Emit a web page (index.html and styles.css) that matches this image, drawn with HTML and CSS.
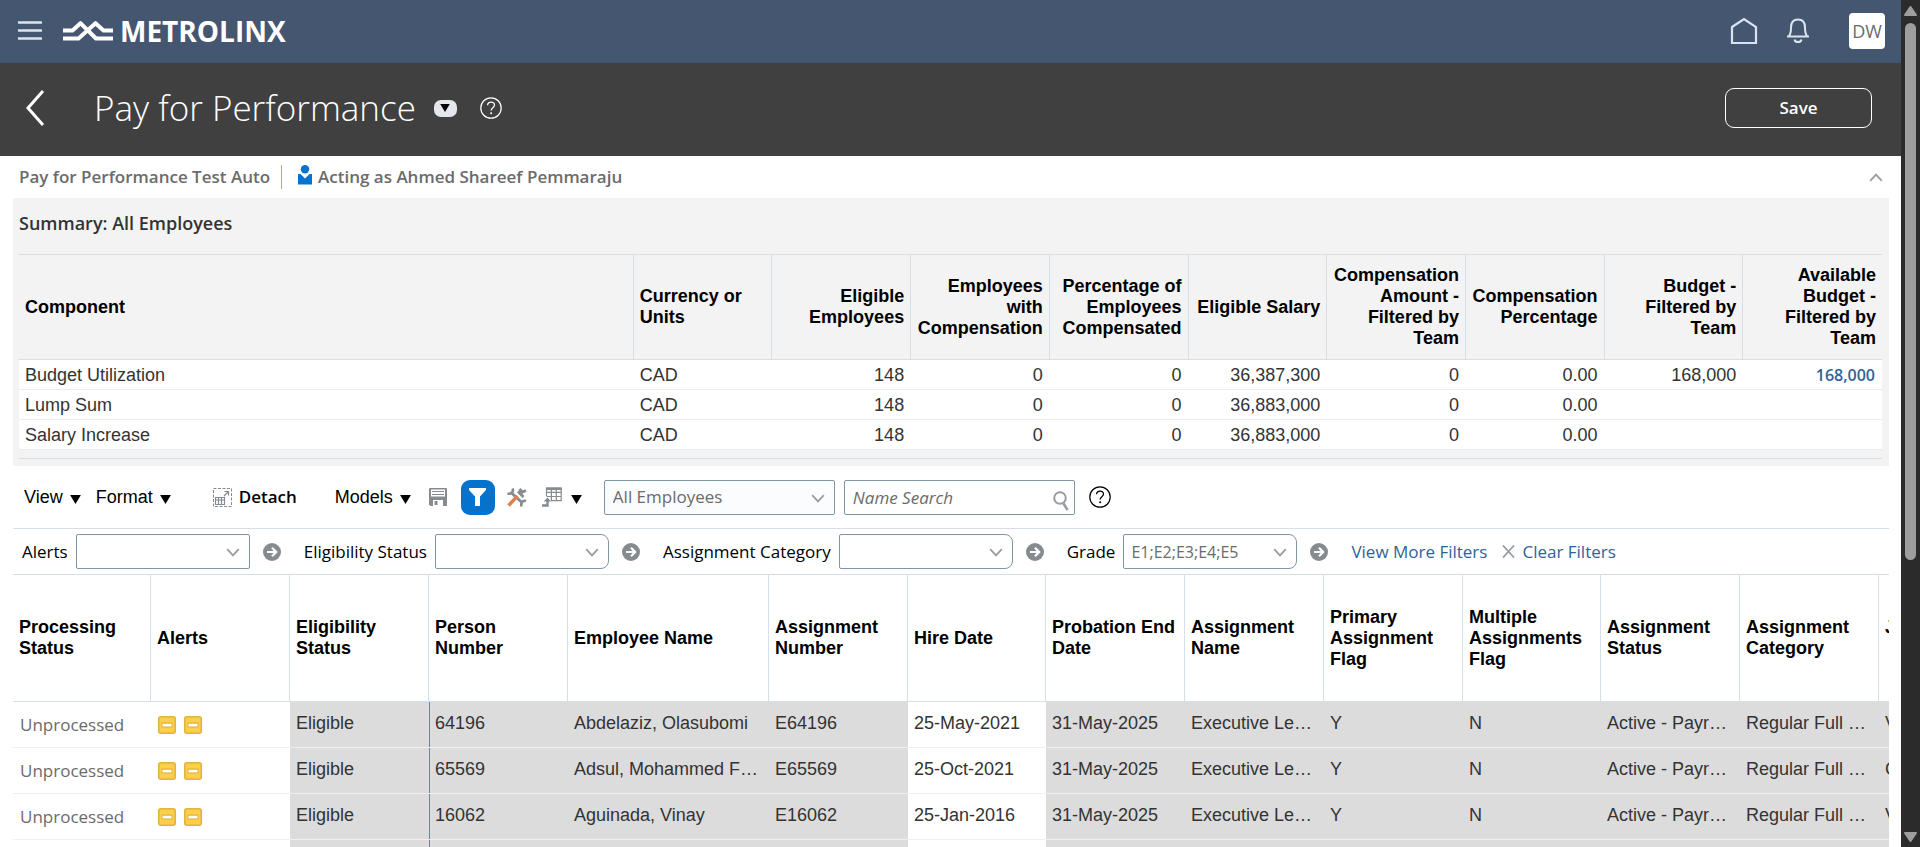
FILE: index.html
```html
<!DOCTYPE html>
<html lang="en">
<head>
<meta charset="utf-8">
<title>Pay for Performance</title>
<link rel="stylesheet" href="styles.css">
</head>
<body>
<svg class="sprite" aria-hidden="true">
  <symbol id="chevron" viewBox="0 0 14 9"><path d="M1.2 1.2 7 7.4l5.800-6.200" fill="none" stroke="currentColor" stroke-width="1.800"/></symbol>
  <symbol id="caret" viewBox="0 0 12 10"><path d="M0 0h12L6 10z" fill="currentColor"/></symbol>
  <symbol id="go" viewBox="0 0 18 18"><circle cx="9" cy="9" r="9" fill="#868b90"/><path d="M4 9h9M9 4.800 13.200 9 9 13.200" fill="none" stroke="#fff" stroke-width="2.200"/></symbol>
  <symbol id="help" viewBox="0 0 22 22"><circle cx="11" cy="11" r="10.200" fill="none" stroke="currentColor" stroke-width="1.200"/><path d="M7.600 8.300c0-4.400 6.900-4.200 6.900-.3 0 2.600-3.400 2.700-3.400 5.500" fill="none" stroke="currentColor" stroke-width="1.300"/><circle cx="11.100" cy="16.300" r="1" fill="currentColor"/></symbol>
  <symbol id="minus" viewBox="0 0 18 18"><rect x=".75" y=".75" width="16.500" height="16.500" rx="2" fill="#fccf4a" stroke="#dfb440" stroke-width="1.500"/><rect x="3.500" y="6.500" width="11" height="5" fill="#dfb440"/><rect x="4.500" y="7.800" width="9" height="2.600" fill="#fff"/></symbol>
</svg>
<div class="window">
  <div class="page">
    <header class="brandbar">
      <button class="plain" aria-label="Menu">
        <svg width="24" height="22" viewBox="0 0 24 22"><path d="M0 2.500h24M0 10.500h24M0 18.500h24" stroke="#dbe4ee" stroke-width="2.400"/></svg>
      </button>
      <a class="brand" href="#">
        <svg width="50" height="20" viewBox="0 0 50 20" fill="none" stroke="#fff" stroke-width="4" stroke-linejoin="round"><path d="M0 9.500h9.500L17.500 2.200 33 17.500h17"/><path d="M0 17.500h15.500L32.500 2.200 40.500 9.500H50"/></svg>
        <span>METROLINX</span>
      </a>
      <div class="brandbar-actions">
        <button class="plain" aria-label="Home"><svg width="28" height="28" viewBox="0 0 28 28"><path d="M2 10 14 2l12 8v16H2z" fill="none" stroke="#dbe4ee" stroke-width="2.200"/></svg></button>
        <button class="plain" aria-label="Notifications"><svg width="22" height="26" viewBox="0 0 22 26" fill="none" stroke="#dbe4ee" stroke-width="2"><path d="M0 18.500h22M2 18c1.800-2 2-4 2-8.500C4 4 7 1.500 11 1.500s7 2.500 7 8c0 4.500.2 6.500 2 8.500"/><path d="M7.500 21.500c.6 3.400 6.400 3.400 7 0"/></svg></button>
        <button class="avatar">DW</button>
      </div>
    </header>

    <div class="titlebar">
      <button class="plain back" aria-label="Back"><svg width="20" height="36" viewBox="0 0 20 36"><path d="M18 1 3 18l15 17" fill="none" stroke="#fff" stroke-width="3"/></svg></button>
      <h1>Pay for Performance</h1>
      <button class="pill" aria-label="More"><svg width="10" height="8"><use href="#caret"/></svg></button>
      <button class="plain light" aria-label="Help"><svg width="22" height="22"><use href="#help"/></svg></button>
      <button class="save">Save</button>
    </div>

    <main>
      <div class="context">
        <span class="plan">Pay for Performance Test Auto</span>
        <svg width="14" height="20" viewBox="0 0 14 20" fill="#0572ce"><circle cx="7" cy="4.200" r="4.200"/><path d="M0 9h2.500L7 13.500 11.500 9H14v10.500H0z"/></svg>
        <span>Acting as Ahmed Shareef Pemmaraju</span>
        <button class="plain collapse" aria-label="Collapse"><svg width="14" height="9" class="flip"><use href="#chevron"/></svg></button>
      </div>

      <section class="summary">
        <h2>Summary: All Employees</h2>
        <div class="summary-frame">
        <table class="summary-table">
          <thead>
            <tr><th class="first">Component</th><th class="left">Currency or Units</th><th>Eligible Employees</th><th>Employees with Compensation</th><th>Percentage of Employees Compensated</th><th>Eligible Salary</th><th>Compensation Amount - Filtered by Team</th><th>Compensation Percentage</th><th>Budget - Filtered by Team</th><th>Available Budget - Filtered by Team</th></tr>
          </thead>
          <tbody>
            <tr><td class="left">Budget Utilization</td><td class="left">CAD</td><td>148</td><td>0</td><td>0</td><td>36,387,300</td><td>0</td><td>0.00</td><td>168,000</td><td><a href="#">168,000</a></td></tr>
            <tr><td class="left">Lump Sum</td><td class="left">CAD</td><td>148</td><td>0</td><td>0</td><td>36,883,000</td><td>0</td><td>0.00</td><td></td><td></td></tr>
            <tr><td class="left">Salary Increase</td><td class="left">CAD</td><td>148</td><td>0</td><td>0</td><td>36,883,000</td><td>0</td><td>0.00</td><td></td><td></td></tr>
          </tbody>
        </table>
        </div>
      </section>

      <div class="toolbar">
        <button class="menu view">View <svg width="11" height="9"><use href="#caret"/></svg></button>
        <button class="menu format">Format <svg width="11" height="9"><use href="#caret"/></svg></button>
        <button class="menu detach"><svg width="19" height="19" viewBox="0 0 19 19" fill="none" stroke="#868b90"><rect x=".5" y=".5" width="18" height="18" stroke-dasharray="3 1.500"/><path d="M2.500 9.500h9v7h-9zM2.500 12h9M5.500 9.500v7M8.500 9.500v7" stroke-width="1.200"/><path d="M11 8l4-4M11.500 3.500h4v4" stroke-width="1.200"/></svg><span>Detach</span></button>
        <button class="menu models">Models <svg width="11" height="9"><use href="#caret"/></svg></button>
        <button class="plain save-view" aria-label="Save view"><svg width="18" height="18" viewBox="0 0 18 18"><path d="M0 1a1 1 0 0 1 1-1h16a1 1 0 0 1 1 1v17H1.500L0 16.500z" fill="#868b90"/><path d="M2 1.500h14v7H2zM4 12h10v6H4z" fill="#fff"/><path d="M3 3.500h12M3 6.500h12" stroke="#868b90" stroke-width="1.200"/><path d="M5.500 13h3v4h-3z" fill="#868b90"/></svg></button>
        <button class="filter-toggle" aria-label="Filter"><svg width="17" height="18" viewBox="0 0 17 18"><path d="M0 0h17v2l-6 6.500V18H6V8.500L0 2z" fill="#fff"/></svg></button>
        <button class="plain tools" aria-label="Tools"><svg width="20" height="19" viewBox="0 0 20 19" fill="none"><path d="M4 4.500 15.500 15" stroke="#868b90" stroke-width="3"/><path d="M5.500.5c1.500 3-1.500 6-5 5M19 13c-3-1-5.500 1.500-4.500 5.500" stroke="#868b90" stroke-width="2.600"/><path d="M11 3.500 16.500 9M12.500 1l3 3 3.500-1.500" stroke="#868b90" stroke-width="2.800"/><path d="M10.500 8 1.500 17.500" stroke="#dd7f4e" stroke-width="3.400"/></svg></button>
        <button class="menu actions" aria-label="Actions"><svg width="20" height="20" viewBox="0 0 20 20" fill="none" stroke="#868b90"><path d="M4.500 9V1h14.700v12.700H9M4.500 5.300h14.700M4.500 9.500h14.700M9.400 1v12.700M14.300 1v12.700" stroke-width="1.200"/><path d="M4 .5h15.500v2.500H4z" fill="#868b90" stroke="none"/><path d="M0 18.500h5.500V14" stroke-width="2.400"/><path d="M1.800 14.500 5.500 10.500l3.700 4z" fill="#868b90" stroke="none"/></svg><svg width="11" height="9"><use href="#caret"/></svg></button>
        <span class="field wide"><select aria-label="Team"><option>All Employees</option></select><svg width="14" height="9"><use href="#chevron"/></svg></span>
        <span class="field wide search"><input type="text" placeholder="Name Search" aria-label="Name Search"><svg width="16" height="20" viewBox="0 0 16 20" fill="none" stroke="#999da1"><circle cx="7" cy="7" r="5.800" stroke-width="2"/><path d="M10.500 12.500 14.500 19" stroke-width="2.600"/></svg></span>
        <button class="plain" aria-label="Help"><svg width="22" height="22"><use href="#help"/></svg></button>
      </div>

      <div class="filters">
        <div class="filter"><label for="f1">Alerts</label><span class="field"><select id="f1"><option></option></select><svg width="14" height="9"><use href="#chevron"/></svg></span><button class="plain" aria-label="Apply Alerts"><svg width="18" height="18"><use href="#go"/></svg></button></div>
        <div class="filter"><label for="f2">Eligibility Status</label><span class="field round"><select id="f2"><option></option></select><svg width="14" height="9"><use href="#chevron"/></svg></span><button class="plain" aria-label="Apply Eligibility Status"><svg width="18" height="18"><use href="#go"/></svg></button></div>
        <div class="filter"><label for="f3">Assignment Category</label><span class="field round"><select id="f3"><option></option></select><svg width="14" height="9"><use href="#chevron"/></svg></span><button class="plain" aria-label="Apply Assignment Category"><svg width="18" height="18"><use href="#go"/></svg></button></div>
        <div class="filter"><label for="f4">Grade</label><span class="field round"><select id="f4"><option>E1;E2;E3;E4;E5</option></select><svg width="14" height="9"><use href="#chevron"/></svg></span><button class="plain" aria-label="Apply Grade"><svg width="18" height="18"><use href="#go"/></svg></button></div>
        <a href="#">View More Filters</a>
        <a href="#" class="clear"><svg width="13" height="13" viewBox="0 0 13 13"><path d="M1 0.500 12 12.500M12 .5 1 12.500" stroke="#999da1" stroke-width="1.800"/></svg>Clear Filters</a>
      </div>

      <div class="grid-scroll">
        <table class="grid">
          <colgroup><col class="c-status"><col><col><col><col class="c-name"><col><col class="c-status"><col><col><col><col class="c-status"><col><col><col></colgroup>
          <thead>
            <tr><th>Processing Status</th><th>Alerts</th><th>Eligibility Status</th><th>Person Number</th><th>Employee Name</th><th>Assignment Number</th><th>Hire Date</th><th>Probation End Date</th><th>Assignment Name</th><th>Primary Assignment Flag</th><th>Multiple Assignments Flag</th><th>Assignment Status</th><th>Assignment Category</th><th>J<br>&nbsp;</th></tr>
          </thead>
          <tbody>
            <tr><td class="status">Unprocessed</td><td class="alerts"><svg width="18" height="18"><use href="#minus"/></svg><svg width="18" height="18"><use href="#minus"/></svg></td><td>Eligible</td><td class="frozen">64196</td><td>Abdelaziz, Olasubomi</td><td>E64196</td><td class="open">25-May-2021</td><td>31-May-2025</td><td>Executive Le…</td><td>Y</td><td>N</td><td>Active - Payr…</td><td>Regular Full …</td><td>V</td></tr>
            <tr><td class="status">Unprocessed</td><td class="alerts"><svg width="18" height="18"><use href="#minus"/></svg><svg width="18" height="18"><use href="#minus"/></svg></td><td>Eligible</td><td class="frozen">65569</td><td>Adsul, Mohammed F…</td><td>E65569</td><td class="open">25-Oct-2021</td><td>31-May-2025</td><td>Executive Le…</td><td>Y</td><td>N</td><td>Active - Payr…</td><td>Regular Full …</td><td>C</td></tr>
            <tr><td class="status">Unprocessed</td><td class="alerts"><svg width="18" height="18"><use href="#minus"/></svg><svg width="18" height="18"><use href="#minus"/></svg></td><td>Eligible</td><td class="frozen">16062</td><td>Aguinada, Vinay</td><td>E16062</td><td class="open">25-Jan-2016</td><td>31-May-2025</td><td>Executive Le…</td><td>Y</td><td>N</td><td>Active - Payr…</td><td>Regular Full …</td><td>V</td></tr>
            <tr><td class="status"></td><td class="alerts"></td><td></td><td class="frozen"></td><td></td><td></td><td class="open"></td><td></td><td></td><td></td><td></td><td></td><td></td><td></td></tr>
          </tbody>
        </table>
      </div>
    </main>
  </div>
  <div class="scrollbar" aria-hidden="true">
    <svg width="13" height="10" viewBox="0 0 13 10"><path d="M6.500 1 12 9H1z" fill="#9e9e9e" stroke="#9e9e9e" stroke-width="2" stroke-linejoin="round"/></svg>
    <div class="track"><div class="thumb"></div></div>
    <svg width="13" height="10" viewBox="0 0 13 10"><path d="M6.500 9 12 1H1z" fill="#9e9e9e" stroke="#9e9e9e" stroke-width="2" stroke-linejoin="round"/></svg>
  </div>
</div>
</body>
</html>
```
FILE: styles.css
```css
* { box-sizing: border-box; }

body {
  margin: 0;
  font-family: "Liberation Sans", Arial, sans-serif;
  font-size: 18px;
  color: #333;
  background: #fff;
}

button, select, input { font: inherit; color: inherit; margin: 0; }
button { border: 0; background: none; padding: 0; cursor: pointer; }
svg { display: block; flex: none; }
a { color: #2e6399; text-decoration: none; }

.sprite { position: absolute; width: 0; height: 0; }
.window { display: flex; height: 100vh; overflow: hidden; }
.page { flex: 1; min-width: 0; overflow: hidden; }
.plain { display: flex; align-items: center; justify-content: center; }

.brandbar {
  display: flex;
  align-items: center;
  height: 63px;
  padding: 0 16px 2px 18px;
  background: #455671;
}
.brand {
  display: flex;
  align-items: center;
  gap: 7px;
  margin-left: 21px;
  color: #fff;
  font: 700 28px/32px "Open Sans", sans-serif;
}
.brandbar-actions { display: flex; align-items: center; gap: 29px; margin-left: auto; }
.avatar {
  width: 36px;
  height: 36px;
  margin-left: 11px;
  border-radius: 4px;
  background: #fff;
  color: #6b6b6b;
  font: 18px/36px "Open Sans", sans-serif;
}

.titlebar {
  display: flex;
  align-items: center;
  height: 93px;
  padding: 0 29px 3px 25px;
  background: #404040;
  color: #fff;
}
h1 {
  margin: 0 18px 0 49px;
  font: 300 35px/48px "Open Sans", sans-serif;
}
.pill {
  display: flex;
  align-items: center;
  justify-content: center;
  width: 23px;
  height: 17px;
  margin-right: 23px;
  border-radius: 7px;
  background: #e4e8ec;
  color: #000;
}
.save {
  width: 147px;
  height: 40px;
  margin-left: auto;
  border: 1px solid #fff;
  border-radius: 9px;
  font: 600 17px/24px "Open Sans", sans-serif;
}

main { padding: 0 12px 0 13px; }

.context {
  display: flex;
  align-items: center;
  height: 42px;
  padding: 0 6px;
  color: #6b6b6b;
  font: 600 17px/24px "Open Sans", sans-serif;
}
.context > svg { margin: 0 6px 5px 16px; }
.plan { padding-right: 11px; border-right: 1px solid #a9a994; }
.collapse { margin-left: auto; color: #999da1; }
.flip { transform: rotate(180deg); }

.summary { padding: 0 7px 7px 6px; background: #f3f3f3; }
h2 {
  margin: 0;
  padding: 13px 0 19px;
  color: #333;
  font: 600 18px/24px "Open Sans", sans-serif;
}
.summary-frame { padding-bottom: 8px; border-bottom: 1px solid #d6dfe6; }

table { border-collapse: separate; border-spacing: 0; table-layout: fixed; }
th { color: #000; font-weight: 700; line-height: 21px; vertical-align: middle; }

.summary-table { width: 100%; border-top: 1px solid #d6dfe6; }
.summary-table th {
  height: 105px;
  padding: 0 6px;
  border-right: 1px solid #d6dfe6;
  border-bottom: 1px solid #d6dfe6;
  text-align: right;
}
.summary-table th.first { width: 33%; }
.summary-table th:last-child { border-right: 0; }
.summary-table td {
  height: 30px;
  padding: 2px 7px 0 6px;
  border-bottom: 1px solid #ebebeb;
  background: #fff;
  text-align: right;
}
.summary-table tr > .left, .summary-table th.first { text-align: left; }
.summary-table td a { font: 600 16px/20px "Open Sans", sans-serif; }

.toolbar { display: flex; align-items: center; height: 62px; padding: 0 11px; color: #000; }
.menu { display: flex; align-items: center; gap: 7px; }
.menu > svg:last-child { margin-top: 4px; }
.format { margin-left: 15px; }
.detach { margin-left: 42px; font: 600 17px/24px "Open Sans", sans-serif; }
.models { margin-left: 38px; }
.save-view { margin-left: 18px; }
.filter-toggle {
  display: flex;
  align-items: center;
  justify-content: center;
  width: 34px;
  height: 35px;
  margin: 0 12px 0 14px;
  border-radius: 9px;
  background: #0572ce;
}
.actions { gap: 9px; margin: 0 22px 0 15px; }
.field { position: relative; display: block; width: 174px; }
.field select, .field input {
  display: block;
  width: 100%;
  height: 35px;
  padding: 0 8px;
  border: 1px solid #7f97a3;
  border-radius: 2px;
  outline: 0;
  background: #fff;
  color: #6b6b6b;
  appearance: none;
  font: 17px/24px "Open Sans", sans-serif;
}
.field > svg { position: absolute; right: 10px; top: 14px; color: #999da1; pointer-events: none; }
.field.round select { border-radius: 2px 8px 8px 2px; font-size: 16px; padding: 0 7px; }
.wide { width: 231px; margin-right: 9px; }
.wide select { background: #fafcfe; }
.search { margin-right: 14px; }
.search input::placeholder { color: #6b6b6b; font-style: italic; opacity: 1; }
.search > svg { right: 6px; top: 11px; }

.filters {
  display: flex;
  align-items: center;
  gap: 23px;
  height: 47px;
  padding: 0 9px;
  border-top: 1px solid #d6dfe6;
  border-bottom: 1px solid #d6dfe6;
  font: 17px/24px "Open Sans", sans-serif;
}
.filter { display: flex; align-items: center; gap: 13px; }
.filter label { margin-right: -5px; color: #000; font-weight: 500; }
.clear { display: flex; align-items: center; gap: 7px; margin-left: -8px; }

.grid-scroll { overflow: hidden; }
.grid { width: 2004px; }
.grid col { width: 139px; }
.grid .c-status { width: 138px; }
.grid .c-name { width: 201px; }
.grid th {
  height: 127px;
  padding: 0 4px 0 6px;
  border-right: 1px solid #d6dfe6;
  border-bottom: 1px solid #d6dfe6;
  text-align: left;
}
.grid td {
  height: 46px;
  padding: 0 6px 3px;
  border-bottom: 1px solid #f0f0f0;
  background: #dcdcdc;
  white-space: nowrap;
  vertical-align: middle;
}
.grid .status { padding: 0 7px; background: #fff; color: #6b6b6b; font: 17px/24px "Open Sans", sans-serif; }
.grid .alerts { padding: 0 7px; background: #fff; }
.grid .alerts svg { display: inline-block; margin: 0 8px 0 0; vertical-align: middle; }
.grid .open { background: #fff; }
.grid .frozen { box-shadow: inset 1px 0 #00b0d8; }

.scrollbar {
  display: flex;
  flex-direction: column;
  align-items: center;
  flex: none;
  gap: 7px;
  width: 19px;
  padding: 6px 0 5px;
  background: #2b2b2b;
}
.track { flex: 1; }
.thumb { width: 11px; height: 67%; border-radius: 6px; background: #9e9e9e; }
```
